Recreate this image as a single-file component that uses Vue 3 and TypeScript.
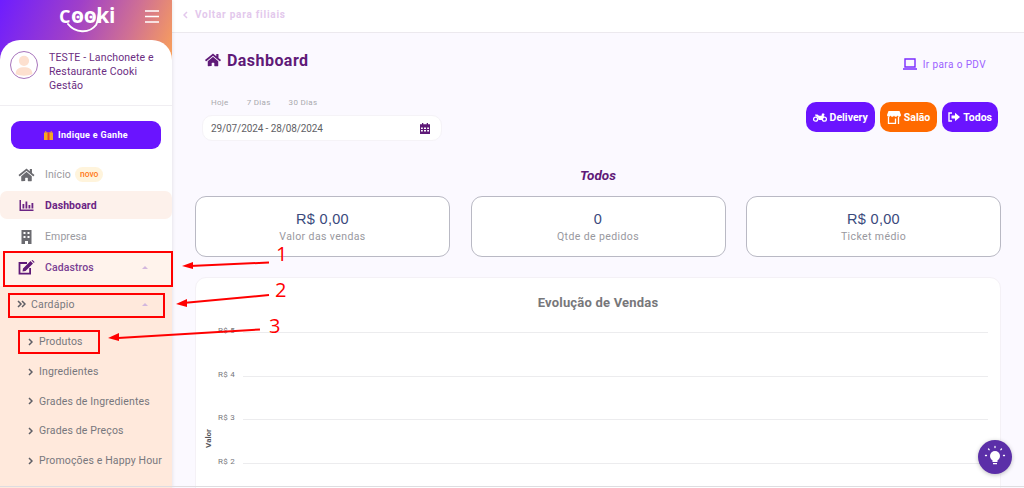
<script setup lang="ts">
const menu = [
  { label: 'Ingredientes' },
  { label: 'Grades de Ingredientes' },
  { label: 'Grades de Preços' },
  { label: 'Promoções e Happy Hour' },
];
const ranges = ['Hoje', '7 Dias', '30 Dias'];
const stats = [
  { value: 'R$ 0,00', label: 'Valor das vendas' },
  { value: '0', label: 'Qtde de pedidos' },
  { value: 'R$ 0,00', label: 'Ticket médio' },
];
const ticks = ['R$ 5', 'R$ 4', 'R$ 3', 'R$ 2'];
</script>

<template>
  <div class="page">
    <aside class="sidebar">
      <header class="brand">
        <div class="logo">
          <span class="logo-text"><small>C</small>ooki</span>
          <svg class="logo-smile" width="56" height="34" viewBox="0 0 56 34">
            <path d="M9 24c7 9 21 10 28 1 2-3 2-8 3-12" fill="none" stroke="#fff" stroke-width="2" stroke-linecap="round" />
            <circle cx="19" cy="17" r="1.600" fill="#fff" />
            <circle cx="32" cy="17" r="1.600" fill="#fff" />
          </svg>
        </div>
        <svg class="burger" width="14" height="13" viewBox="0 0 14 13"><path d="M0 1h14M0 6.500h14M0 12h14" stroke="#fff" stroke-width="1.300" /></svg>
      </header>
      <div class="panel">
        <div class="profile">
          <div class="avatar">
            <svg width="28" height="28" viewBox="0 0 28 28"><circle cx="14" cy="9.500" r="5.500" fill="#fde0cf" /><path d="M5 24c0-6 4-7.500 9-7.500s9 1.500 9 7.500c-5 2-13 2-18 0z" fill="#fde0cf" /></svg>
          </div>
          <p class="profile-name">TESTE - Lanchonete e Restaurante Cooki Gestão</p>
        </div>
        <button class="invite"><svg width="9" height="9" viewBox="0 0 9 9"><rect y="1.500" width="9" height="7.500" fill="#f5a623" /><rect x="3.500" y="1.500" width="2" height="7.500" fill="#e8452c" /><path d="M1 0l3 1.500h1L8 0v1.500H1z" fill="#f5a623" /></svg>Indique e Ganhe</button>

        <nav class="nav">
          <div class="item plain first">
            <svg class="ico" width="17" height="14" viewBox="0 0 576 512"><path fill="currentColor" d="M280 148 96 300v164c0 9 7 16 16 16l112-.3c9 0 16-7 16-16V368c0-9 7-16 16-16h64c9 0 16 7 16 16v96c0 9 7 16 16 16l112 .3c9 0 16-7 16-16V300L296 148c-5-4-11-4-16 0zM572 251l-84-69V44c0-7-5-12-12-12h-56c-7 0-12 5-12 12v72l-90-74c-18-15-43-15-61 0L4 251c-5 4-6 12-2 17l26 31c4 5 12 6 17 2L280 107c5-4 11-4 16 0l235 194c5 4 13 3 17-2l26-31c4-5 3-13-2-17z" /></svg>
            <span>Início</span><span class="badge">novo</span>
          </div>
          <div class="item active">
            <svg class="ico" width="14" height="11" viewBox="0 0 14 11"><path fill="currentColor" d="M0 0h1.500v9.500H14V11H0zM3 4h1.800v4.500H3zM6 1.500h1.800v7H6zM9 5h1.800v3.500H9zM12 3h1.800v5.500H12z" /></svg>
            <span>Dashboard</span>
          </div>
          <div class="item plain company">
            <svg class="ico" width="12" height="14" viewBox="0 0 12 14"><path fill="currentColor" fill-rule="evenodd" d="M1 0h10v14H7.500v-3h-3v3H1zM3 2v2h2V2zm4 0v2h2V2zM3 6v2h2V6zm4 0v2h2V6z" /></svg>
            <span>Empresa</span>
          </div>
          <div class="item open">
            <svg class="ico" width="17" height="15" viewBox="0 0 17 15"><path fill="none" stroke="currentColor" stroke-width="1.800" d="M9 3H1.500v10.600h10.600V8" /><path fill="currentColor" d="M5 8.500 12.500 1l2.500 2.500L7.500 11 4.500 11.500zM13.500.5l1-.5 2 2-.5 1z" /></svg>
            <span class="grow">Cadastros</span><i class="caret"></i>
          </div>
          <div class="sub">
            <div class="sub-head">
              <svg width="9" height="8" viewBox="0 0 9 8"><path d="M1 1l3 3-3 3M5 1l3 3-3 3" fill="none" stroke="#5f5f66" stroke-width="1.500" /></svg>
              <span class="grow">Cardápio</span><i class="caret"></i>
            </div>
            <div class="sub-item">
              <svg width="5" height="8" viewBox="0 0 5 8"><path d="M1 1l3 3-3 3" fill="none" stroke="#5f5f66" stroke-width="1.500" /></svg>
              <span>Produtos</span>
            </div>
            <div v-for="m in menu" :key="m.label" class="sub-item">
              <svg width="5" height="8" viewBox="0 0 5 8"><path d="M1 1l3 3-3 3" fill="none" stroke="#5f5f66" stroke-width="1.500" /></svg>
              <span>{{ m.label }}</span>
            </div>
          </div>
        </nav>
      </div>
    </aside>

    <main class="main">
      <div class="topbar">
        <svg width="5" height="8" viewBox="0 0 5 8"><path d="M4 1 1 4l3 3" fill="none" stroke="#e3c8ec" stroke-width="1.500" /></svg>
        <span>Voltar para filiais</span>
      </div>
      <div class="content">
        <div class="title-row">
          <h1>
            <svg width="16" height="14" viewBox="0 0 576 512"><path fill="currentColor" d="M280 148 96 300v164c0 9 7 16 16 16l112-.3c9 0 16-7 16-16V368c0-9 7-16 16-16h64c9 0 16 7 16 16v96c0 9 7 16 16 16l112 .3c9 0 16-7 16-16V300L296 148c-5-4-11-4-16 0zM572 251l-84-69V44c0-7-5-12-12-12h-56c-7 0-12 5-12 12v72l-90-74c-18-15-43-15-61 0L4 251c-5 4-6 12-2 17l26 31c4 5 12 6 17 2L280 107c5-4 11-4 16 0l235 194c5 4 13 3 17-2l26-31c4-5 3-13-2-17z" /></svg>
            Dashboard
          </h1>
          <a class="pdv">
            <svg width="14" height="12" viewBox="0 0 14 12"><path d="M2 1h10v8H2zM0 11h14" fill="none" stroke="#7b2cff" stroke-width="1.400" /></svg>
            Ir para o PDV
          </a>
        </div>
        <div class="filters">
          <div>
            <div class="ranges"><span v-for="r in ranges" :key="r">{{ r }}</span></div>
            <div class="date">
              <span>29/07/2024 - 28/08/2024</span>
              <svg width="10" height="11" viewBox="0 0 10 11"><path fill="#5f1a78" fill-rule="evenodd" d="M2 0h1.300v1.300h3.400V0H8v1.300h2V11H0V1.300h2zM1 4.500V6h1.800V4.500zm3 0V6h2V4.500zm3.200 0V6H9V4.500zM1 7v1.500h1.800V7zm3 0v1.500h2V7zm3.200 0v1.500H9V7z" /></svg>
            </div>
          </div>
          <div class="channels">
            <button class="chan">
              <svg width="14" height="9" viewBox="0 0 14 9"><circle cx="2.600" cy="6.200" r="2" fill="none" stroke="#fff" stroke-width="1.300" /><circle cx="11.400" cy="6.200" r="2" fill="none" stroke="#fff" stroke-width="1.300" /><path fill="#fff" d="M2 1.500h2.500L6 2.800h2.500L9 .500h2l.6 1.200-1 1.300.8 1-2.400 3H5.500L5 4.500 2.500 3z" /></svg>
              Delivery
            </button>
            <button class="chan orange">
              <svg width="14" height="13" viewBox="0 0 14 13"><path fill="#fff" d="M1.500 0h11L14 4c0 1.200-1 1.800-1.800 1.800S10.800 5.300 10.500 4.500C10.200 5.300 9.500 5.800 8.700 5.800S7.300 5.300 7 4.500C6.700 5.300 6 5.800 5.300 5.800S3.800 5.300 3.500 4.500C3.200 5.300 2.600 5.800 1.800 5.800S0 5.200 0 4z" /><path fill="none" stroke="#fff" stroke-width="1.300" d="M1.500 6v6.400h7V7.500M11.500 6v7" /></svg>
              Salão
            </button>
            <button class="chan last">
              <svg width="12" height="10" viewBox="0 0 12 10"><path fill="none" stroke="#fff" stroke-width="1.400" d="M4 1H1v8h3" /><path fill="#fff" d="M3.500 3.500H7V.800L12 5 7 9.200V6.500H3.500z" /></svg>
              Todos
            </button>
          </div>
        </div>
        <h2>Todos</h2>
        <div class="stats">
          <div v-for="s in stats" :key="s.label" class="stat">
            <strong>{{ s.value }}</strong>
            <span>{{ s.label }}</span>
          </div>
        </div>
        <section class="chart">
          <h3>Evolução de Vendas</h3>
          <div class="plot">
            <span class="axis">Valor</span>
            <div v-for="t in ticks" :key="t" class="tick">
              <span>{{ t }}</span><i></i>
            </div>
          </div>
        </section>
      </div>
    </main>

    <button class="help" aria-label="Ajuda">
      <svg width="22" height="24" viewBox="0 0 22 24"><circle cx="11" cy="11" r="5" fill="#fff" /><path fill="#fff" d="M8.500 15h5v2h-5zM9 18h4v1.300H9z" /><path stroke="#fff" stroke-width="1.300" stroke-linecap="round" d="M11 1.500v1M4.500 4l.6.7M17.500 4l-.6.7M1.500 10.500h1M19.500 10.500h1" /></svg>
    </button>

    <!-- marcações vermelhas por cima do print -->
    <div class="mark" style="left:3px;top:251px;width:170px;height:36px"></div>
    <div class="mark" style="left:8px;top:293px;width:157px;height:25px"></div>
    <div class="mark" style="left:18px;top:330px;width:82px;height:24px"></div>
    <svg class="arrows" width="1024" height="488" viewBox="0 0 1024 488">
      <g stroke="#f00" stroke-width="2" fill="#f00">
        <path d="M190 266 269 262.500" />
        <path d="M183 303 269 295" />
        <path d="M118 338 260 329.500" />
        <path stroke="none" d="M182 266l11-4v7zM176 304l11-5v8zM108 338l11-5v8z" />
      </g>
      <text x="276" y="261">1</text>
      <text x="275" y="297">2</text>
      <text x="269" y="333">3</text>
    </svg>
  </div>
</template>

<style>
html, body { margin: 0; height: 100%; overflow: hidden; background: #fbf9ff; }
</style>

<style scoped>
.page {
  position: relative;
  display: flex;
  width: 1024px;
  height: 488px;
  overflow: hidden;
  font-family: Roboto, "Liberation Sans", sans-serif;
  background: #fbf9ff;
}
.page::after {
  content: "";
  position: absolute;
  left: 0;
  right: 0;
  bottom: 1px;
  height: 1px;
  background: #dedde1;
  z-index: 2;
}
.sidebar {
  flex: none;
  width: 172px;
  display: flex;
  flex-direction: column;
  background: #fff linear-gradient(112deg, #6e1dff 0%, #a040c8 42%, #cf7094 72%, #fba258 100%) no-repeat;
  background-size: 100% 62px;
  box-shadow: 1px 0 3px rgba(0, 0, 0, 0.08);
  z-index: 1;
}
.brand {
  height: 40px;
  flex: none;
  position: relative;
  display: flex;
  align-items: flex-start;
  justify-content: flex-end;
  padding: 10px 13px 0 0;
  box-sizing: border-box;
}
.logo {
  position: absolute;
  left: 59px;
  top: 0;
  width: 56px;
  height: 34px;
}
.logo-text {
  display: block;
  font-family: "Open Sans", sans-serif;
  color: #fff;
  font-size: 21px;
  font-weight: 700;
  letter-spacing: -0.4px;
  line-height: 31px;
}
.logo-text small {
  font-size: 18px;
  margin-right: 1px;
}
.logo-smile {
  position: absolute;
  left: 0;
  top: 0;
}
.panel {
  flex: 1;
  background: #fff;
  border-radius: 20px 20px 0 0;
  display: flex;
  flex-direction: column;
  min-height: 0;
}
.profile {
  display: flex;
  gap: 11px;
  padding: 9px 10px 0 10px;
  height: 66px;
  box-sizing: border-box;
  border-bottom: 1px solid #f0eef2;
  flex: none;
}
.avatar {
  flex: none;
  width: 26px;
  height: 26px;
  margin-top: 2px;
  border: 1px solid #a774bc;
  border-radius: 50%;
  display: flex;
  align-items: center;
  justify-content: center;
  overflow: hidden;
}
.profile-name {
  margin: 2px 0 0;
  color: #6b2d82;
  font-size: 10.500px;
  line-height: 14px;
  letter-spacing: 0.15px;
}
.invite {
  flex: none;
  margin: 15px 11px 0;
  height: 28px;
  border: 0;
  border-radius: 9px;
  background: #6a14ff;
  color: #fff;
  font: 700 9px Roboto, sans-serif;
  letter-spacing: 0.3px;
  display: flex;
  align-items: center;
  justify-content: center;
  gap: 5px;
}
.nav {
  flex: 1;
  display: flex;
  flex-direction: column;
  margin-top: 11px;
  font-size: 10.500px;
  letter-spacing: 0.1px;
}
.item {
  height: 31px;
  display: flex;
  align-items: center;
  padding-left: 18px;
  flex: none;
}
.ico { flex: none; margin-right: 10px; width: 17px; }
.item.plain { color: #9a9aa0; }
.item.plain .ico { color: #6b6b70; }
.item.first { height: 29px; }
.item.company { height: 31px; padding-top: 2px; box-sizing: border-box; }
.badge {
  margin-left: 4px;
  padding: 0 5px;
  height: 15px;
  line-height: 15px;
  border-radius: 8px;
  background: #fff4dc;
  color: #ff7a1a;
  font-size: 8.500px;
  font-weight: 500;
  letter-spacing: 0;
}
.item.active {
  height: 28px;
  margin-top: 2px;
  margin-bottom: 1px;
  background: #fdf1eb;
  border-radius: 7px;
  color: #6b2484;
  font-weight: 700;
}
.item.open {
  height: 35px;
  box-sizing: border-box;
  padding-bottom: 2px;
  background: #fff3ec;
  color: #7a3f93;
  font-weight: 500;
}
.item.open .ico { color: #5f1a78; }
.grow { flex: 1; }
.caret {
  width: 0;
  height: 0;
  border-left: 3px solid transparent;
  border-right: 3px solid transparent;
  border-bottom: 3px solid #d3b7de;
  margin-right: 24px;
}
.sub {
  flex: 1;
  background: #ffe9dc;
  color: #77777c;
  min-height: 0;
}
.sub-head {
  height: 36px;
  display: flex;
  align-items: center;
  gap: 5px;
  padding-left: 17px;
  font-size: 10.500px;
  letter-spacing: 0.2px;
}
.sub-item {
  height: 29.700px;
  display: flex;
  align-items: center;
  gap: 6px;
  padding-left: 28px;
  font-size: 10.500px;
  letter-spacing: 0.14px;
  white-space: nowrap;
  position: relative;
  top: 5px;
}
.main {
  flex: 1;
  min-width: 0;
  display: flex;
  flex-direction: column;
}
.topbar {
  flex: none;
  height: 33px;
  box-sizing: border-box;
  background: #fff;
  border-bottom: 1px solid #ece9ee;
  display: flex;
  align-items: center;
  gap: 7px;
  padding: 0 0 3px 11px;
  color: #e3c8ec;
  font-size: 10px;
  font-weight: 700;
  letter-spacing: 0.75px;
}
.content {
  flex: 1;
  padding: 0 23px 0 23px;
  min-height: 0;
}
.title-row {
  display: flex;
  justify-content: space-between;
  align-items: center;
  padding-top: 16px;
  height: 22px;
}
h1 {
  margin: 0 0 0 10px;
  font-size: 16px;
  font-weight: 700;
  letter-spacing: 0.45px;
  color: #5f1a78;
  display: flex;
  align-items: center;
  gap: 6px;
}
.pdv {
  display: flex;
  align-items: center;
  gap: 6px;
  padding: 8px 15px 0 0;
  font-size: 10px;
  letter-spacing: 0.4px;
  color: #9b62ff;
}
.filters {
  display: flex;
  justify-content: space-between;
  margin-top: 20px;
}
.ranges {
  display: flex;
  gap: 18px;
  padding-left: 16px;
  font-size: 8px;
  letter-spacing: 0.3px;
  line-height: 10px;
  color: #a9a9ae;
  margin-top: 7px;
}
.date {
  margin: 7px 0 0 7px;
  width: 240px;
  height: 26px;
  box-sizing: border-box;
  padding: 0 11px 0 8px;
  background: #fff;
  border: 1px solid #f5f3f7;
  border-radius: 10px;
  display: flex;
  align-items: center;
  justify-content: space-between;
  font-size: 10px;
  letter-spacing: -0.1px;
  color: #616166;
}
.channels {
  display: flex;
  gap: 5px;
  padding: 11px 3px 0 0;
  height: 30px;
}
.chan {
  height: 30px;
  padding: 0 7px;
  border: 0;
  border-radius: 10px;
  background: #6a14ff;
  color: #fff;
  font: 700 10.500px Roboto, sans-serif;
  display: flex;
  align-items: center;
  gap: 3px;
}
.chan.last { padding: 0 6px; }
.chan.orange { background: #ff6a00; }
h2 {
  margin: 25px 0 0;
  text-align: center;
  font-size: 13.500px;
  font-style: italic;
  font-weight: 700;
  line-height: 18px;
  color: #5f1a78;
}
.stats {
  display: grid;
  grid-template-columns: 255px 255px 255px;
  gap: 20.500px;
  margin-top: 12px;
}
.stat {
  height: 61px;
  box-sizing: border-box;
  background: #fff;
  border: 1px solid #b9b9c4;
  border-radius: 11px;
  display: flex;
  flex-direction: column;
  align-items: center;
  justify-content: center;
  padding-top: 1px;
}
.stat strong {
  font-family: "Liberation Sans", sans-serif;
  font-weight: 400;
  font-size: 14.500px;
  line-height: 18px;
  letter-spacing: 0.3px;
  color: #3b4a7d;
  margin-bottom: 1px;
}
.stat span {
  font-size: 10.500px;
  line-height: 16px;
  letter-spacing: 0.4px;
  color: #98989e;
}
.chart {
  margin-top: 20px;
  height: 260px;
  box-sizing: border-box;
  background: #fff;
  border: 1px solid #f4f1f6;
  border-radius: 11px;
  padding-top: 17px;
}
h3 {
  margin: 0;
  text-align: center;
  font-size: 13px;
  font-weight: 700;
  line-height: 16px;
  letter-spacing: 0.2px;
  color: #77777a;
}
.plot {
  position: relative;
  margin-top: 18px;
  padding: 0 12px 0 22px;
}
.tick {
  height: 43.600px;
  display: flex;
  align-items: flex-start;
  gap: 6px;
  font-size: 8px;
  line-height: 4px;
  letter-spacing: 0.3px;
  color: #77777c;
}
.tick span { width: 19px; flex: none; white-space: nowrap; }
.tick i {
  flex: 1;
  height: 1px;
  margin-top: 3px;
  background: #ececee;
}
.axis {
  position: absolute;
  left: 8px;
  top: 100px;
  writing-mode: vertical-rl;
  transform: rotate(180deg);
  font-size: 8px;
  font-weight: 700;
  color: #555559;
}
.help {
  position: absolute;
  right: 12px;
  top: 440px;
  width: 34px;
  height: 34px;
  padding: 0;
  border: 0;
  border-radius: 50%;
  background: #5b2fa8;
  box-shadow: 0 1px 4px rgba(0, 0, 0, 0.25);
  display: flex;
  align-items: center;
  justify-content: center;
  z-index: 3;
}
.mark {
  position: absolute;
  box-sizing: border-box;
  border: 2px solid #f00;
  z-index: 3;
}
.arrows {
  position: absolute;
  left: 0;
  top: 0;
  z-index: 3;
  pointer-events: none;
}
.arrows text {
  fill: #f00;
  font-family: "Open Sans", sans-serif;
  font-size: 20px;
}
</style>
